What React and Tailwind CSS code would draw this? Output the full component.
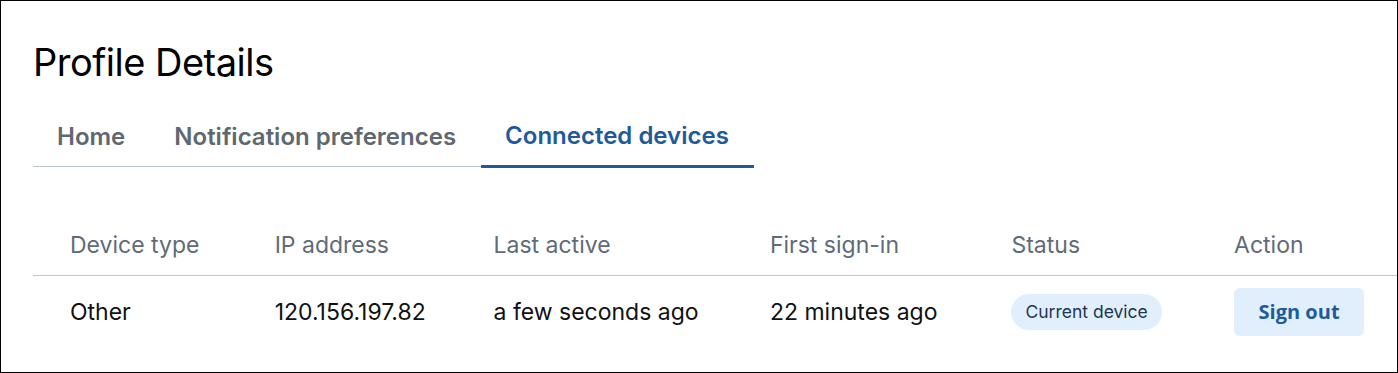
import React, { useState } from "react";

const tabs = ["Home", "Notification preferences", "Connected devices"];

const columns = [
  { label: "Device type", width: "w-[205px]" },
  { label: "IP address", width: "w-[219px]" },
  { label: "Last active", width: "w-[277px]" },
  { label: "First sign-in", width: "w-[242px]" },
  { label: "Status", width: "w-[223px]" },
  { label: "Action", width: "w-[200px]" },
];

const devices = [
  {
    type: "Other",
    ip: "120.156.197.82",
    lastActive: "a few seconds ago",
    firstSignIn: "22 minutes ago",
    current: true,
  },
];

const App = () => {
  const [active, setActive] = useState("Connected devices");

  return (
    <div
      className="w-[1398px] h-[373px] overflow-hidden border border-black bg-white"
      style={{ fontFamily: "Inter, 'Noto Sans', sans-serif" }}
    >
      <div className="pl-[32px] pt-[38px]">
        <h1 className="text-[38px] leading-[46px] font-normal text-black tracking-[-0.5px]">
          Profile Details
        </h1>

        <div className="inline-flex mt-[37px] border-b border-[#b8c0c8]">
          {tabs.map((t) => (
            <button
              key={t}
              onClick={() => setActive(t)}
              className={
                t === active
                  ? "pl-[24px] pr-[25px] pb-[15px] text-[24px] leading-[28px] font-semibold text-[#1f5b9c] border-b-[3px] border-[#1f5b9c] -mb-[2px]"
                  : "pl-[24px] pr-[25px] pb-[15px] text-[24px] leading-[28px] font-semibold text-[#5f6870]"
              }
            >
              {t}
            </button>
          ))}
        </div>

        <table className="mt-[64px] text-left border-collapse">
          <thead>
            <tr className="border-b border-[#c0c6cc]">
              {columns.map((c) => (
                <th
                  key={c.label}
                  className={`${c.width} pl-[37px] pb-[16px] text-[23px] leading-[28px] font-normal text-[#5f6b78]`}
                >
                  {c.label}
                </th>
              ))}
            </tr>
          </thead>
          <tbody>
            {devices.map((d) => (
              <tr key={d.ip}>
                <td className="pl-[37px] pt-[12px] text-[23px] text-[#111]">{d.type}</td>
                <td className="pl-[37px] pt-[12px] text-[23px] text-[#111]">{d.ip}</td>
                <td className="pl-[37px] pt-[12px] text-[23px] text-[#111]">{d.lastActive}</td>
                <td className="pl-[37px] pt-[12px] text-[23px] text-[#111]">{d.firstSignIn}</td>
                <td className="pl-[37px] pt-[12px]">
                  {d.current && (
                    <span className="inline-block rounded-full bg-[#e1effd] px-[14px] py-[6px] text-[17.5px] leading-[24px] text-[#1c3553]">
                      Current device
                    </span>
                  )}
                </td>
                <td className="pl-[37px] pt-[12px]">
                  <button
                    className="w-[130px] h-[48px] rounded-[6px] bg-[#e1effd] text-[20px] font-bold text-[#1f5b9c]"
                    style={{ fontFamily: "'Open Sans', sans-serif" }}
                  >
                    Sign out
                  </button>
                </td>
              </tr>
            ))}
          </tbody>
        </table>
      </div>
    </div>
  );
};

export default App;
